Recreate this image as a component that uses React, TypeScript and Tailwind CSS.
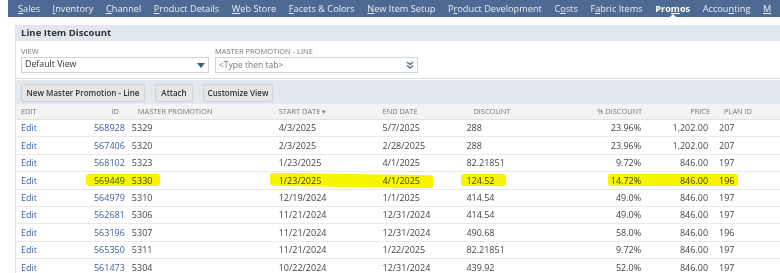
import React from "react";

const nav: { label: string; u: number; active?: boolean }[] = [
  { label: "Sales", u: 0 },
  { label: "Inventory", u: 0 },
  { label: "Channel", u: 0 },
  { label: "Product Details", u: 0 },
  { label: "Web Store", u: 0 },
  { label: "Facets & Colors", u: 0 },
  { label: "New Item Setup", u: 0 },
  { label: "Product Development", u: 1 },
  { label: "Costs", u: 1 },
  { label: "Fabric Items", u: 1 },
  { label: "Promos", u: 3, active: true },
  { label: "Accounting", u: 5 },
  { label: "M", u: 0 },
];

type Row = {
  id: string;
  master: string;
  start: string;
  end: string;
  discount: string;
  pct: string;
  price: string;
  plan: string;
  marked?: boolean;
};

const rows: Row[] = [
  { id: "568928", master: "5329", start: "4/3/2025", end: "5/7/2025", discount: "288", pct: "23.96%", price: "1,202.00", plan: "207" },
  { id: "567406", master: "5320", start: "2/3/2025", end: "2/28/2025", discount: "288", pct: "23.96%", price: "1,202.00", plan: "207" },
  { id: "568102", master: "5323", start: "1/23/2025", end: "4/1/2025", discount: "82.21851", pct: "9.72%", price: "846.00", plan: "197" },
  { id: "569449", master: "5330", start: "1/23/2025", end: "4/1/2025", discount: "124.52", pct: "14.72%", price: "846.00", plan: "196", marked: true },
  { id: "564979", master: "5310", start: "12/19/2024", end: "1/1/2025", discount: "414.54", pct: "49.0%", price: "846.00", plan: "197" },
  { id: "562681", master: "5306", start: "11/21/2024", end: "12/31/2024", discount: "414.54", pct: "49.0%", price: "846.00", plan: "197" },
  { id: "563196", master: "5307", start: "11/21/2024", end: "12/31/2024", discount: "490.68", pct: "58.0%", price: "846.00", plan: "196" },
  { id: "565350", master: "5311", start: "11/21/2024", end: "1/22/2025", discount: "82.21851", pct: "9.72%", price: "846.00", plan: "197" },
  { id: "561473", master: "5304", start: "10/22/2024", end: "12/31/2024", discount: "439.92", pct: "52.0%", price: "846.00", plan: "197" },
];

const Btn = ({ w, children }: { w: string; children: React.ReactNode }) => (
  <button className={`${w} h-[18px] bg-[#e6e6e6] border border-[#cfd3d8] rounded-[2px] text-[8px] font-semibold text-[#333] whitespace-nowrap`}>
    {children}
  </button>
);

// yellow marker strokes on the row of interest
const Marker = ({ className }: { className: string }) => (
  <div className={`absolute bg-[#f8f500] mix-blend-multiply rounded-[3px] ${className}`} />
);

export default function App() {
  return (
    <div className="w-[780px] h-[273px] overflow-hidden bg-white text-[#444] [font-family:'Open_Sans',sans-serif]">
      <div className="ml-[8px] h-[17px] bg-[#4e6a92] flex items-center pl-[10px] gap-[12.6px] whitespace-nowrap overflow-hidden text-[9.2px] text-[#e8edf4]">
        {nav.map((n) => (
          <span key={n.label} className={`relative shrink-0 ${n.active ? "font-bold text-white" : ""}`}>
            {n.label.slice(0, n.u)}
            <span className="underline underline-offset-[1px]">{n.label[n.u]}</span>
            {n.label.slice(n.u + 1)}
            {n.active && (
              <span className="absolute left-[14px] top-[12px] w-0 h-0 border-x-[4px] border-x-transparent border-b-[4px] border-b-white" />
            )}
          </span>
        ))}
      </div>

      <div className="ml-[15px] mt-[8px] border-l border-[#dde2e8]">
        <div className="h-[16px] bg-[#e1e7ef] flex items-center pl-[5px] text-[9.6px] font-bold text-[#333]">
          Line Item Discount
        </div>

        <div className="h-[38px] flex gap-[6px] pl-[5px] pt-[5px] border-b border-[#dcdcdc]">
          <div className="flex flex-col">
            <span className="text-[7.5px] text-[#777] leading-[10px]">VIEW</span>
            <div className="mt-[1px] w-[188px] h-[16px] border border-[#cfd4da] flex items-center justify-between px-[3px] text-[8.8px] text-[#333]">
              Default View
              <svg width="8" height="5" viewBox="0 0 8 5">
                <path d="M0 0 L8 0 L4 5 Z" fill="#3f5a85" />
              </svg>
            </div>
          </div>
          <div className="flex flex-col">
            <span className="text-[7.5px] text-[#777] leading-[10px]">MASTER PROMOTION - LINE</span>
            <div className="mt-[1px] w-[203px] h-[16px] border border-[#cfd4da] flex items-center justify-between px-[3px] text-[8.5px] text-[#777]">
              &lt;Type then tab&gt;
              <svg width="8" height="8" viewBox="0 0 8 8">
                <path d="M1 1 L4 3.5 L7 1 M1 4.5 L4 7 L7 4.5" stroke="#5d6f8c" strokeWidth="1.4" fill="none" />
              </svg>
            </div>
          </div>
        </div>

        <div className="mt-[1px] h-[24px] bg-[#e3e8ef] flex items-center gap-[10px] pl-[5px] pt-[1px]">
          <Btn w="w-[124px]">New Master Promotion - Line</Btn>
          <Btn w="w-[38px]">Attach</Btn>
          <Btn w="w-[70px]">Customize View</Btn>
        </div>

        <div className="h-[16px] bg-[#f3f3f3] flex items-center pt-[1px] text-[7.4px] text-[#777] border-b border-[#e2e2e2]">
          <div className="w-[75px] pl-[5px]">EDIT</div>
          <div className="w-[38px] text-right pr-[10px]">ID</div>
          <div className="w-[146px] pl-[9px]">MASTER PROMOTION</div>
          <div className="w-[105px] pl-[4px]">START DATE ▾</div>
          <div className="w-[84px] pl-[3px]">END DATE</div>
          <div className="w-[120px] pl-[10px]">DISCOUNT</div>
          <div className="w-[60px] text-right pr-[1px]">% DISCOUNT</div>
          <div className="w-[70px] text-right pr-[3px]">PRICE</div>
          <div className="w-[67px] pl-[11px]">PLAN ID</div>
        </div>

        {rows.map((r) => (
          <div
            key={r.id}
            className="relative h-[17.4px] flex items-center text-[9px] whitespace-nowrap border-b border-[#e9e9e9]"
          >
            <div className="w-[75px] pl-[5px] text-[#3d5f9e]">Edit</div>
            <div className="w-[38px] text-right pr-[4px] text-[#3d5f9e]">{r.id}</div>
            <div className="w-[146px] pl-[3px]">{r.master}</div>
            <div className="w-[105px] pl-[4px]">{r.start}</div>
            <div className="w-[84px] pl-[3px]">{r.end}</div>
            <div className="w-[120px] pl-[3px]">{r.discount}</div>
            <div className="w-[60px] text-right pr-[2px]">{r.pct}</div>
            <div className="w-[70px] text-right pr-[5px]">{r.price}</div>
            <div className="w-[67px] pl-[6px]">{r.plan}</div>
            {r.marked && (
              <>
                <Marker className="left-[70px] top-[2px] w-[74px] h-[12px]" />
                <Marker className="left-[254px] top-[2px] w-[163px] h-[13px] rotate-[1deg]" />
                <Marker className="left-[445px] top-[2px] w-[45px] h-[12px]" />
                <Marker className="left-[592px] top-[2px] w-[130px] h-[12px]" />
              </>
            )}
          </div>
        ))}
      </div>
    </div>
  );
}
